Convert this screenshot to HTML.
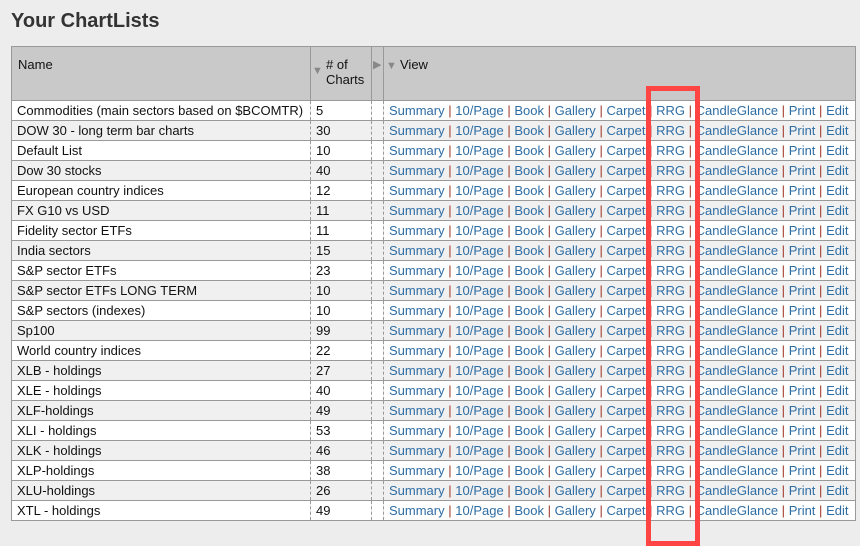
<!DOCTYPE html>
<html><head><style>
body{margin:0;background:#ededed;font-family:"Liberation Sans",Arial,sans-serif;width:860px;height:528px;overflow:hidden;position:relative}
h1{position:absolute;left:11px;top:10px;margin:0;font-size:20px;font-weight:bold;color:#333}
table{position:absolute;left:11px;top:46px;border-collapse:collapse;table-layout:fixed;width:845px;font-size:13px}
th{background:#c9c9c9;font-weight:normal;text-align:left;vertical-align:top;height:54px;padding:10px 6px 0 6px;border:1px solid #999;color:#111;line-height:15px;box-sizing:border-box;white-space:nowrap;position:relative}
td{height:20px;padding:0 0 0 5px;border-bottom:1px solid #999;border-left:1px dashed #999;border-right:1px dashed #999;white-space:nowrap;overflow:hidden;color:#111;line-height:19px;box-sizing:border-box}
td:first-child{border-left:1px solid #999}
td:last-child{border-right:1px solid #999}
tr:nth-child(even) td{background:#f0f0f0}
tr:nth-child(odd) td{background:#fff}
a{color:#2e6da4;text-decoration:none}
.s{color:#a0392a}
.tri{color:#888;font-size:11px;position:absolute}
#box{position:absolute;left:646px;top:86px;width:44px;height:450px;border:5px solid #f44;}
</style></head><body>
<h1>Your ChartLists</h1>
<table>
<colgroup><col style="width:299px"><col style="width:61px"><col style="width:12px"><col></colgroup>
<tr><th>Name</th><th><span class="tri" style="left:1px;top:17px">▼</span><span style="position:absolute;left:15px;top:10px"># of<br>Charts</span></th><th><span class="tri" style="left:1px;top:11px">▶</span></th><th style="padding-left:16px"><span class="tri" style="left:2px;top:12px">▼</span>View</th></tr>
</table>
<div id="box"></div>
<script>
var rows=[["Commodities (main sectors based on $BCOMTR)",5],["DOW 30 - long term bar charts",30],["Default List",10],["Dow 30 stocks",40],["European country indices",12],["FX G10 vs USD",11],["Fidelity sector ETFs",11],["India sectors",15],["S&amp;P sector ETFs",23],["S&amp;P sector ETFs LONG TERM",10],["S&amp;P sectors (indexes)",10],["Sp100",99],["World country indices",22],["XLB - holdings",27],["XLE - holdings",40],["XLF-holdings",49],["XLI - holdings",53],["XLK - holdings",46],["XLP-holdings",38],["XLU-holdings",26],["XTL - holdings",49]];
var links=["Summary","10/Page","Book","Gallery","Carpet","RRG","CandleGlance","Print","Edit"];
var v=links.map(function(l){return '<a>'+l+'</a>'}).join(' <span class="s">|</span> ');
var t=document.querySelector('table'),h='';
rows.forEach(function(r){h+='<tr><td>'+r[0]+'</td><td>'+r[1]+'</td><td></td><td>'+v+'</td></tr>'});
t.insertAdjacentHTML('beforeend',h);
</script>
</body></html>
